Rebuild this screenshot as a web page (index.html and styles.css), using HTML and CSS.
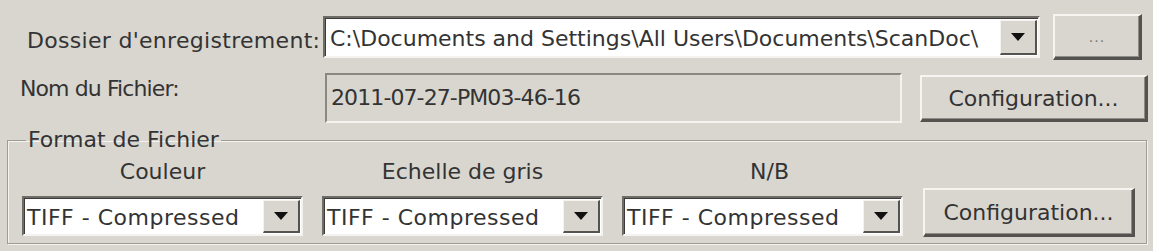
FILE: index.html
```html
<!DOCTYPE html>
<html lang="fr">
<head>
<meta charset="utf-8">
<title>Enregistrement</title>
<link rel="stylesheet" href="styles.css">
</head>
<body>
<div class="dialog">
  <div class="row row-folder">
    <span class="label label-folder">Dossier d'enregistrement:</span>
    <div class="combo combo-folder">
      <span class="combo-text">C:\Documents and Settings\All Users\Documents\ScanDoc\</span>
      <span class="drop"><svg width="14" height="8" viewBox="0 0 14 8"><path d="M0 0H14L7 8Z" fill="#111"/></svg></span>
    </div>
    <button class="btn btn-browse">...</button>
  </div>
  <div class="row row-name">
    <span class="label label-name">Nom du Fichier:</span>
    <div class="field">2011-07-27-PM03-46-16</div>
    <button class="btn btn-config">Configuration...</button>
  </div>
  <fieldset class="group">
    <legend class="legend">Format de Fichier</legend>
    <div class="formats">
      <div class="col">
        <span class="col-label">Couleur</span>
        <div class="combo combo-format">
          <span class="combo-text">TIFF - Compressed</span>
          <span class="drop"><svg width="14" height="8" viewBox="0 0 14 8"><path d="M0 0H14L7 8Z" fill="#111"/></svg></span>
        </div>
      </div>
      <div class="col">
        <span class="col-label">Echelle de gris</span>
        <div class="combo combo-format">
          <span class="combo-text">TIFF - Compressed</span>
          <span class="drop"><svg width="14" height="8" viewBox="0 0 14 8"><path d="M0 0H14L7 8Z" fill="#111"/></svg></span>
        </div>
      </div>
      <div class="col col-nb">
        <span class="col-label">N/B</span>
        <div class="combo combo-format">
          <span class="combo-text">TIFF - Compressed</span>
          <span class="drop"><svg width="14" height="8" viewBox="0 0 14 8"><path d="M0 0H14L7 8Z" fill="#111"/></svg></span>
        </div>
      </div>
      <button class="btn btn-config2">Configuration...</button>
    </div>
  </fieldset>
</div>
</body>
</html>
```
FILE: styles.css
```css
* { box-sizing: border-box; }
html, body {
  margin: 0;
  padding: 0;
  background: #d9d6d0;
}
body {
  width: 1153px;
  height: 251px;
  overflow: hidden;
  font-family: "DejaVu Sans", Verdana, sans-serif;
  font-size: 22px;
  color: #333;
}
.dialog {
  padding-top: 14px;
}
.row {
  display: flex;
}
.row-folder {
  align-items: center;
  height: 46px;
}
.label-folder {
  width: 323px;
  padding-left: 27px;
  padding-top: 7px;
  white-space: nowrap;
  letter-spacing: 0.3px;
}
.combo {
  display: flex;
  align-items: stretch;
  background: #fff;
  border-top: 2px solid #6f6d68;
  border-left: 2px solid #6f6d68;
  border-right: 2px solid #f4f3f0;
  border-bottom: 2px solid #f4f3f0;
  box-shadow: inset 1px 1px 0 #3c3b38;
}
.combo-folder {
  width: 717px;
  height: 42px;
}
.combo-text {
  flex: 1;
  display: flex;
  align-items: center;
  padding-left: 5px;
  padding-top: 3px;
  white-space: nowrap;
  overflow: hidden;
}
.drop {
  width: 37px;
  margin: 2px 1px 1px 0;
  display: flex;
  align-items: center;
  justify-content: center;
  background: #d9d6d0;
  border-top: 1px solid #f4f3f0;
  border-left: 1px solid #f4f3f0;
  border-right: 2px solid #55534f;
  border-bottom: 2px solid #55534f;
}
.btn {
  font-family: inherit;
  font-size: 22px;
  color: #333;
  background: #d9d6d0;
  padding: 0;
  border-top: 2px solid #f6f5f2;
  border-left: 2px solid #f6f5f2;
  border-right: 3px solid #55534f;
  border-bottom: 3px solid #55534f;
  box-shadow: inset -1px -1px 0 #8f8d88;
}
.btn-browse {
  margin-left: 13px;
  width: 89px;
  height: 46px;
  font-size: 14px;
  color: #7a7873;
  letter-spacing: 1px;
}
.row-name {
  margin-top: 13px;
  height: 50px;
}
.label-name {
  width: 325px;
  padding-left: 20px;
  padding-top: 3px;
  white-space: nowrap;
  letter-spacing: -0.9px;
}
.field {
  width: 577px;
  height: 50px;
  display: flex;
  align-items: center;
  padding-left: 4px;
  padding-bottom: 1px;
  letter-spacing: -0.9px;
  border-top: 2px solid #8a8883;
  border-left: 2px solid #8a8883;
  border-right: 2px solid #f4f3f0;
  border-bottom: 2px solid #f4f3f0;
}
.btn-config {
  margin-left: 18px;
  margin-top: 2px;
  width: 228px;
  height: 47px;
}
.group {
  margin: 5px 0 0 7px;
  width: 1140px;
  height: 116px;
  padding: 0 0 0 14px;
  border: 1px solid #9e9c97;
  box-shadow: inset 1px 1px 0 #f4f3f0, 1px 1px 0 #f4f3f0;
}
.legend {
  padding: 0 2px;
  margin-left: 4px;
  line-height: 24px;
}
.formats {
  display: flex;
  align-items: flex-end;
  margin-top: 8px;
}
.col {
  width: 281px;
  margin-right: 19px;
  display: flex;
  flex-direction: column;
  align-items: center;
}
.col-nb {
  margin-right: 20px;
}
.col-label {
  line-height: 24px;
  margin-bottom: 12px;
}
.col-nb .col-label {
  margin-left: 14px;
}
.combo-format {
  width: 281px;
  height: 40px;
}
.combo-format .combo-text {
  padding-left: 3px;
  letter-spacing: 0.5px;
}
.btn-config2 {
  width: 212px;
  height: 49px;
  position: relative;
  top: 1px;
}
```
